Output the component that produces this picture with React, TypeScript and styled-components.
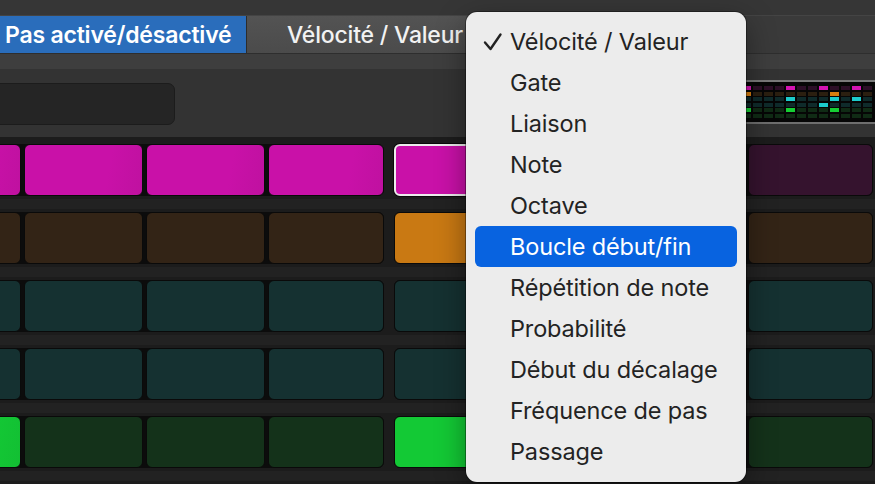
import React from 'react'
import styled, { createGlobalStyle, css } from 'styled-components'

const GlobalStyle = createGlobalStyle`
  html, body {
    margin: 0;
    padding: 0;
    background: #333333;
    overflow: hidden;
  }
  body {
    font-family: Inter, "Liberation Sans", sans-serif;
  }
`

type RowDef = {
  on: string
  off: string
  steps: number[]
}

// 1 = active, 2 = active + selected
const rows: RowDef[] = [
  { on: '#c911a8', off: '#35132e', steps: [1, 1, 1, 1, 2, 0, 0, 0] },
  { on: '#c97913', off: '#332416', steps: [0, 0, 0, 0, 1, 0, 0, 0] },
  { on: '#19c4c4', off: '#153131', steps: [0, 0, 0, 0, 0, 0, 0, 0] },
  { on: '#19c4c4', off: '#153131', steps: [0, 0, 0, 0, 0, 0, 0, 0] },
  { on: '#13c935', off: '#14321a', steps: [1, 0, 0, 0, 1, 0, 0, 0] },
  { on: '#c911a8', off: '#26262a', steps: [0, 0, 0, 0, 0, 0, 0, 0] },
]

const padWidths = [117, 119, 119, 116, 115, 115, 115, 125]

const overview: RowDef[] = [
  { on: '#d414b2', off: '#2c0f27', steps: [1, 0, 0, 0, 1, 0, 0, 1, 0, 0, 1, 0] },
  { on: '#d67d0f', off: '#2b1f10', steps: [1, 0, 0, 0, 0, 0, 0, 0, 1, 0, 0, 0] },
  { on: '#1ccccc', off: '#0f2b2b', steps: [0, 0, 0, 0, 1, 0, 0, 0, 1, 0, 1, 0] },
  { on: '#1ccccc', off: '#0f2b2b', steps: [0, 0, 0, 0, 0, 0, 0, 1, 0, 0, 0, 0] },
  { on: '#16cf34', off: '#102b15', steps: [1, 0, 0, 0, 1, 0, 0, 0, 1, 0, 0, 0] },
  { on: '#16cf34', off: '#102b15', steps: [0, 0, 0, 0, 0, 0, 0, 0, 0, 0, 0, 0] },
]

const menuItems = [
  'Vélocité / Valeur',
  'Gate',
  'Liaison',
  'Note',
  'Octave',
  'Boucle début/fin',
  'Répétition de note',
  'Probabilité',
  'Début du décalage',
  'Fréquence de pas',
  'Passage',
]

const Screen = styled.div`
  position: relative;
  width: 875px;
  height: 484px;
  overflow: hidden;
  display: flex;
  flex-direction: column;
  background: #333333;
`

const TopStrip = styled.div`
  height: 15px;
  flex-shrink: 0;
  background: #363636;
  border-bottom: 1px solid #444444;
`

const TabBar = styled.div`
  height: 37px;
  flex-shrink: 0;
  display: flex;
  background: #3a3a3a;
`

const Tab = styled.div<{ active?: boolean }>`
  display: flex;
  align-items: center;
  height: 100%;
  font-size: 23px;
  letter-spacing: -0.2px;
  color: #ffffff;
  white-space: nowrap;
  ${(p) =>
    p.active
      ? css`
          width: 246px;
          padding-left: 5px;
          box-sizing: border-box;
          background: #2a6dbb;
          font-weight: 600;
        `
      : css`
          width: 460px;
          padding-left: 40px;
          box-sizing: border-box;
          background: linear-gradient(#535353, #4b4b4b);
          border-left: 1px solid #2c2c2c;
          font-weight: 500;
          color: #f2f2f2;
        `}
`

const SubBar = styled.div`
  height: 15px;
  flex-shrink: 0;
  background: #3e3e3e;
  border-top: 1px solid #2e2e2e;
`

const Toolbar = styled.div`
  height: 68px;
  flex-shrink: 0;
  display: flex;
  align-items: flex-start;
  background: #333333;
`

const Field = styled.div`
  margin-top: 14px;
  margin-left: -20px;
  width: 195px;
  height: 42px;
  box-sizing: border-box;
  border-radius: 7px;
  background: #252525;
  border: 1px solid #1c1c1c;
`

const Overview = styled.div`
  margin-left: auto;
  margin-top: 11px;
  width: 135px;
  height: 44px;
  box-sizing: border-box;
  border-top: 2px solid #7a7a7a;
  border-bottom: 2px solid #6e6e6e;
  background: #060606;
  padding: 4px 0 0 2px;
  display: flex;
  flex-direction: column;
  gap: 1.5px;
`

const MiniRow = styled.div`
  display: flex;
  gap: 2px;
`

const MiniCell = styled.div<{ color: string }>`
  width: 9px;
  height: 4px;
  flex-shrink: 0;
  background: ${(p) => p.color};
`

const Grid = styled.div`
  flex: 1;
  background: #1c1c1c;
  padding-top: 7px;
  display: flex;
  flex-direction: column;
`

const Row = styled.div`
  display: flex;
  gap: 10px;
  margin-left: -96px;
  height: 52px;
  flex-shrink: 0;
`

const RowGap = styled.div`
  height: 16px;
  flex-shrink: 0;
  display: flex;
  align-items: center;
  &::after {
    content: '';
    display: block;
    width: 100%;
    height: 10px;
    background: #222222;
  }
`

const Group = styled.div`
  display: flex;
  gap: 3px;
  background: #0c0c0c;
  border-radius: 6px;
`

const Pad = styled.div<{ color: string; active: boolean; selected: boolean }>`
  height: 52px;
  flex-shrink: 0;
  box-sizing: border-box;
  border-radius: 6px;
  border: 1px solid #0a0a0a;
  background: ${(p) =>
    p.active ? `linear-gradient(100deg, ${p.color} 70%, ${p.color}f2)` : p.color};
  ${(p) =>
    p.selected &&
    css`
      border: 2px solid #ececec;
      box-shadow: 0 0 0 1px #0a0a0a;
    `}
`

const Menu = styled.div`
  position: absolute;
  left: 466px;
  top: 12px;
  width: 280px;
  height: 470px;
  box-sizing: border-box;
  padding: 9px 9px;
  background: #ececec;
  border-radius: 11px;
  box-shadow: 0 0 0 1px rgba(0, 0, 0, 0.35), 0 10px 30px rgba(0, 0, 0, 0.4);
  display: flex;
  flex-direction: column;
`

const Item = styled.div<{ highlighted?: boolean }>`
  position: relative;
  height: 41px;
  flex-shrink: 0;
  display: flex;
  align-items: center;
  padding-left: 35px;
  border-radius: 6px;
  font-size: 23.5px;
  letter-spacing: -0.15px;
  white-space: nowrap;
  color: ${(p) => (p.highlighted ? '#ffffff' : '#232323')};
  background: ${(p) => (p.highlighted ? '#0863e0' : 'transparent')};
`

const Check = styled.svg`
  position: absolute;
  left: 8px;
  top: 11px;
`

export default function App() {
  return (
    <>
      <GlobalStyle />
      <Screen>
        <TopStrip />
        <TabBar>
          <Tab active>Pas activé/désactivé</Tab>
          <Tab>Vélocité / Valeur</Tab>
        </TabBar>
        <SubBar />
        <Toolbar>
          <Field />
          <Overview>
            {overview.map((r, i) => (
              <MiniRow key={i}>
                {r.steps.map((s, j) => (
                  <MiniCell key={j} color={s ? r.on : r.off} />
                ))}
              </MiniRow>
            ))}
          </Overview>
        </Toolbar>
        <Grid>
          {rows.map((r, i) => (
            <React.Fragment key={i}>
              <Row>
                {[0, 4].map((start) => (
                  <Group key={start}>
                    {r.steps.slice(start, start + 4).map((s, j) => (
                      <Pad
                        key={j}
                        style={{ width: padWidths[start + j] }}
                        color={s ? r.on : r.off}
                        active={s > 0}
                        selected={s === 2}
                      />
                    ))}
                  </Group>
                ))}
              </Row>
              <RowGap />
            </React.Fragment>
          ))}
        </Grid>
        <Menu>
          {menuItems.map((label, i) => (
            <Item key={label} highlighted={i === 5}>
              {i === 0 && (
                <Check width="20" height="20" viewBox="0 0 20 20">
                  <polyline
                    points="2,10.5 7.5,17 17.5,2.5"
                    fill="none"
                    stroke="#222"
                    strokeWidth="2.4"
                    strokeLinecap="round"
                    strokeLinejoin="round"
                  />
                </Check>
              )}
              {label}
            </Item>
          ))}
        </Menu>
      </Screen>
    </>
  )
}
